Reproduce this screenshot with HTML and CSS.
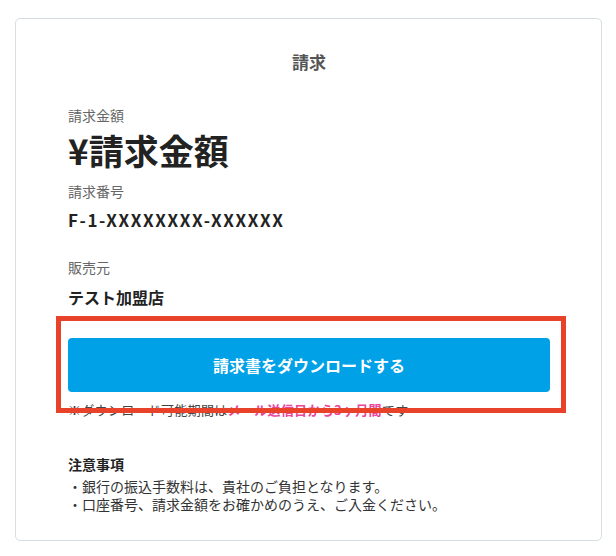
FILE: index.html
```html
<!DOCTYPE html>
<html lang="ja">
<head>
    <meta charset="UTF-8">
    <title>請求</title>
    <link rel="stylesheet" href="styles.css">
</head>
<body>
    <div class="card">
        <h1 class="card-title">請求</h1>

        <div class="field-label first">請求金額</div>
        <div class="amount">¥請求金額</div>

        <div class="field-label">請求番号</div>
        <div class="invoice-no">F-1-XXXXXXXX-XXXXXX</div>

        <div class="field-label seller">販売元</div>
        <div class="store">テスト加盟店</div>

        <button class="download-btn">請求書をダウンロードする</button>
        <p class="download-note">※ダウンロード可能期間は<span class="accent">メール送信日から3ヶ月間</span>です</p>

        <div class="notice">
            <div class="notice-title">注意事項</div>
            <ul class="notice-list">
                <li>・銀行の振込手数料は、貴社のご負担となります。</li>
                <li>・口座番号、請求金額をお確かめのうえ、ご入金ください。</li>
            </ul>
        </div>

        <div class="highlight-box"></div>
    </div>
</body>
</html>
```

FILE: styles.css
```css
body {
    margin: 0;
    padding: 18px 14px 0 15px;
    background-color: #fff;
    font-family: "Noto Sans CJK JP", "Noto Sans", sans-serif;
    color: #333;
}
.card {
    position: relative;
    box-sizing: border-box;
    width: 587px;
    height: 523px;
    padding: 31px 51px 0 52px;
    border: 1px solid #d6dee3;
    border-radius: 5px;
    background-color: #fff;
}
.card-title {
    margin: 0;
    font-size: 17px;
    line-height: 24px;
    font-weight: bold;
    color: #555;
    text-align: center;
}
.field-label {
    margin-top: 6px;
    font-size: 14px;
    line-height: 18px;
    color: #666;
}
.field-label.first {
    margin-top: 32px;
}
.field-label.seller {
    margin-top: 27px;
}
.amount {
    font-size: 35px;
    line-height: 52px;
    font-weight: bold;
    color: #222;
}
.invoice-no {
    margin-top: 9px;
    font-size: 17px;
    line-height: 22px;
    font-weight: bold;
    letter-spacing: 1.6px;
    color: #222;
}
.store {
    margin-top: 10px;
    font-size: 16px;
    line-height: 22px;
    font-weight: bold;
    color: #222;
}
.download-btn {
    display: block;
    width: 100%;
    height: 54px;
    margin-top: 30px;
    border: none;
    border-radius: 4px;
    background-color: #00a1e6;
    color: #fff;
    font-family: inherit;
    font-size: 16px;
    font-weight: bold;
    cursor: pointer;
}
.download-note {
    margin: 9px 0 0;
    font-size: 13px;
    line-height: 18px;
    letter-spacing: 0.3px;
    color: #444;
}
.accent {
    color: #e8479c;
    font-weight: bold;
}
.notice {
    margin-top: 36px;
}
.notice-title {
    font-size: 14px;
    line-height: 18px;
    font-weight: bold;
    color: #222;
}
.notice-list {
    margin: 4px 0 0;
    padding: 0;
    list-style: none;
    font-size: 14px;
    line-height: 18px;
    color: #333;
}
.highlight-box {
    position: absolute;
    left: 40px;
    top: 297px;
    width: 500px;
    height: 87px;
    border: 5px solid #e8432a;
}
```
